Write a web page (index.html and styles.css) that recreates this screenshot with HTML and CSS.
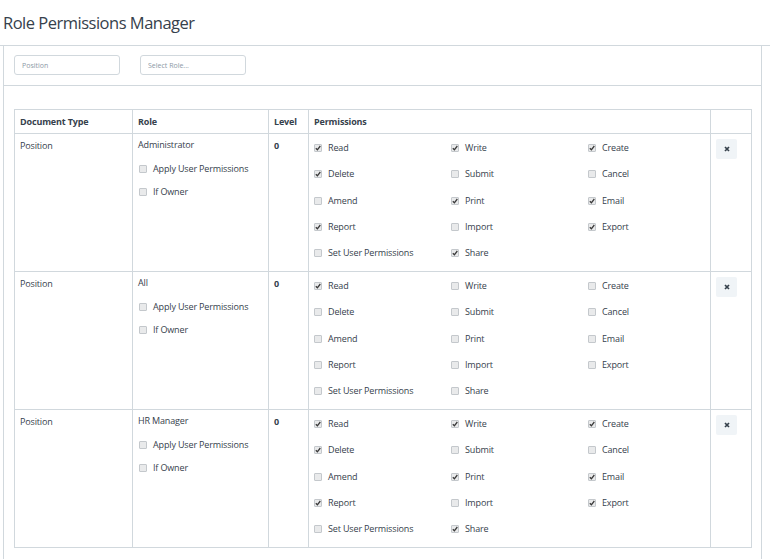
FILE: index.html
```html
<!DOCTYPE html>
<html>
<head>
<meta charset="utf-8">
<link rel="stylesheet" href="styles.css">
</head>
<body>
<div class="page-head"><h1 class="title">Role Permissions Manager</h1></div>
<div class="panel">
  <div class="filters">
    <input class="field" placeholder="Position">
    <input class="field" placeholder="Select Role...">
  </div>
  <div class="table-wrap">
    <table class="perm-table">
      <colgroup>
        <col class="c-doc"><col class="c-role"><col class="c-level"><col class="c-perm"><col class="c-rm">
      </colgroup>
      <thead>
        <tr><th>Document Type</th><th>Role</th><th>Level</th><th>Permissions</th><th></th></tr>
      </thead>
      <tbody id="rows"></tbody>
    </table>
  </div>
</div>
<script src="app.js"></script>
</body>
</html>
```

FILE: styles.css
```css
* { box-sizing: border-box; }
body {
  margin: 0;
  font-family: "Open Sans", "Noto Sans", sans-serif;
  color: #36414c;
  background: #fff;
}
.page-head {
  height: 46px;
  border-bottom: 1px solid #d1d8dd;
  padding: 11px 0 0 3px;
}
.title {
  margin: 0;
  font-size: 16.5px;
  letter-spacing: -0.5px;
  font-weight: 400;
  color: #36414c;
  line-height: 24px;
}
.panel {
  margin: 0 8px 0 3px;
  border-left: 1px solid #d1d8dd;
  border-right: 1px solid #d1d8dd;
  padding-bottom: 11px;
}
.filters {
  display: flex;
  gap: 20px;
  padding: 9px 10px 10px 10px;
  border-bottom: 1px solid #d1d8dd;
}
.field {
  width: 106px;
  height: 20px;
  border: 1px solid #d1d8dd;
  border-radius: 3px;
  font-family: "Open Sans", sans-serif;
  font-size: 7px;
  padding: 0 7px;
  color: #36414c;
  outline: none;
}
.field::placeholder { color: #8d99a6; }
.table-wrap { padding: 23px 10px 0 10px; }
.perm-table {
  border-collapse: collapse;
  width: 737px;
  table-layout: fixed;
  font-size: 9px;
  letter-spacing: -0.15px;
}
.c-doc { width: 118px; }
.c-role { width: 136px; }
.c-level { width: 40px; }
.c-perm { width: 402px; }
.c-rm { width: 41px; }
.perm-table th, .perm-table td {
  border: 1px solid #d1d8dd;
  text-align: left;
  vertical-align: top;
  padding: 0 5px;
}
.perm-table th {
  height: 24px;
  font-weight: 700;
  vertical-align: middle;
}
.perm-table td {
  height: 138px;
  padding-top: 5px;
}
.level { font-weight: 700; }
.role-name { line-height: 12px; }
.role-opts { display: flex; flex-direction: column; gap: 11px; margin-top: 12px; }
.chk-item { display: flex; align-items: center; gap: 6px; line-height: 12px; }
.chk {
  width: 8px;
  height: 8px;
  border: 1px solid #c4c8cc;
  border-radius: 1px;
  background: #e9eaeb;
  flex: none;
  display: flex;
  align-items: center;
  justify-content: center;
}
.chk svg { display: block; }
.role-opts .chk-item { padding-left: 1px; }
.perm-grid {
  display: grid;
  grid-template-columns: 137px 137px 110px;
  row-gap: 14.3px;
  padding-top: 3px;
}
.rm-btn {
  width: 21px;
  height: 20px;
  border: none;
  border-radius: 2px;
  background: #f0f4f7;
  padding: 0;
  display: flex;
  align-items: center;
  justify-content: center;
}
.perm-table td.rm-cell { padding-top: 5px; }
```

FILE: app.js
```js
var rows = [
  { role: "Administrator", perms: {Read:1,Write:1,Create:1,Delete:1,Submit:0,Cancel:0,Amend:0,Print:1,Email:1,Report:1,Import:0,Export:1,"Set User Permissions":0,Share:1} },
  { role: "All", perms: {Read:1,Write:0,Create:0,Delete:0,Submit:0,Cancel:0,Amend:0,Print:0,Email:0,Report:0,Import:0,Export:0,"Set User Permissions":0,Share:0} },
  { role: "HR Manager", perms: {Read:1,Write:1,Create:1,Delete:1,Submit:0,Cancel:0,Amend:0,Print:1,Email:1,Report:1,Import:0,Export:1,"Set User Permissions":0,Share:1} }
];
var order = ["Read","Write","Create","Delete","Submit","Cancel","Amend","Print","Email","Report","Import","Export","Set User Permissions","Share"];
var tick = '<svg width="6" height="6" viewBox="0 0 6 6"><path d="M0.8 3.2 L2.4 4.8 L5.3 1" fill="none" stroke="#3a3a3a" stroke-width="1.3"/></svg>';
var cross = '<svg width="6" height="6" viewBox="0 0 6 6"><path d="M1 1 L5 5 M5 1 L1 5" fill="none" stroke="#36414c" stroke-width="1.7"/></svg>';
function chk(label, on) {
  return '<label class="chk-item"><span class="chk">' + (on ? tick : '') + '</span><span>' + label + '</span></label>';
}
var html = "";
rows.forEach(function (r) {
  var perms = order.map(function (p) { return chk(p, r.perms[p]); }).join("");
  html += '<tr><td>Position</td>' +
    '<td><div class="role-name">' + r.role + '</div><div class="role-opts">' + chk("Apply User Permissions", 0) + chk("If Owner", 0) + '</div></td>' +
    '<td class="level">0</td>' +
    '<td><div class="perm-grid">' + perms + '</div></td>' +
    '<td class="rm-cell"><button class="rm-btn" aria-label="Remove">' + cross + '</button></td></tr>';
});
document.getElementById("rows").innerHTML = html;
```
